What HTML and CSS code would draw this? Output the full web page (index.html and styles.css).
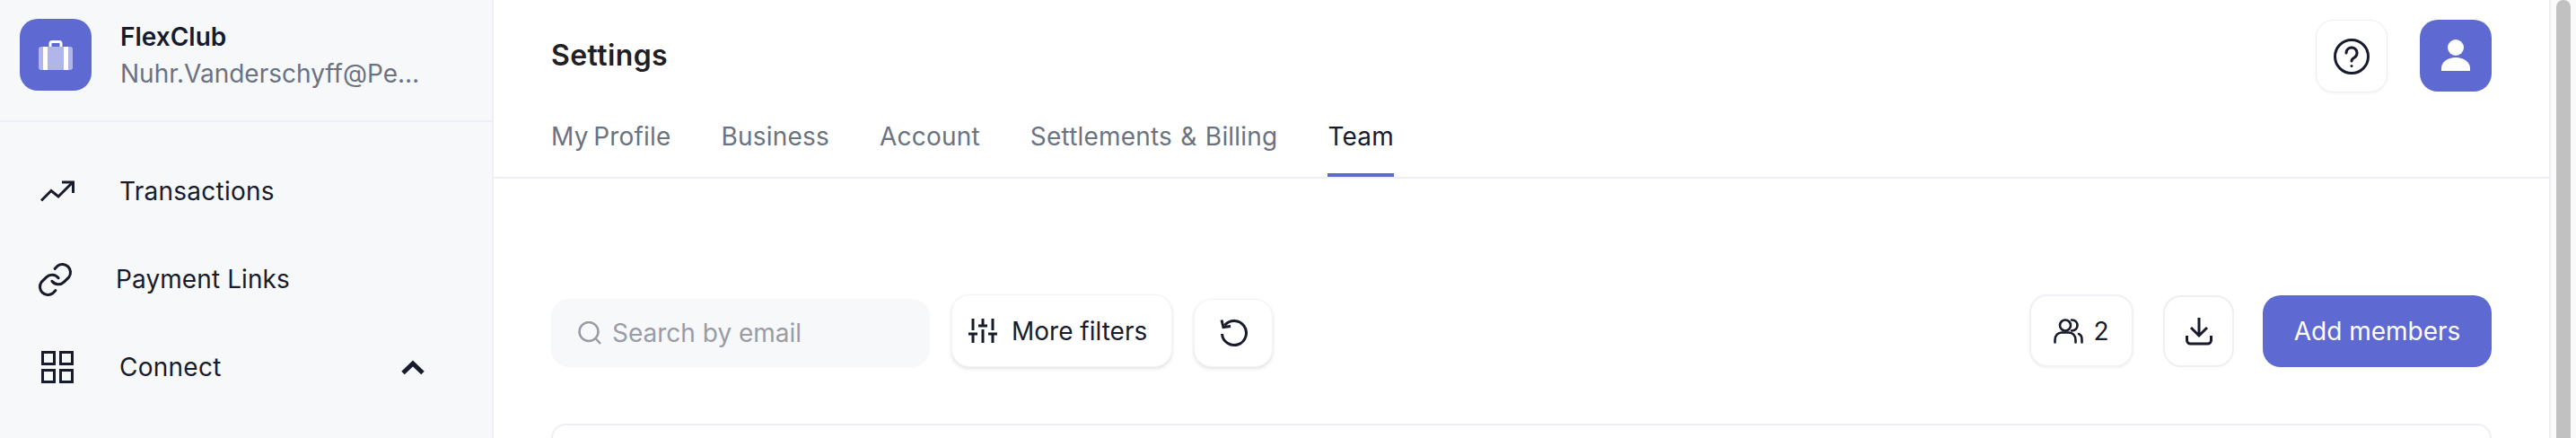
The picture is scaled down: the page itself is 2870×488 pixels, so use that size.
FILE: index.html
```html
<!DOCTYPE html>
<html lang="en">
<head>
<meta charset="UTF-8">
<meta name="viewport" content="width=device-width, initial-scale=1.0">
<title>Settings - Team</title>
<link rel="stylesheet" href="styles.css">
</head>
<body>
<div class="app">
  <aside class="sidebar">
    <div class="brand">
      <div class="brand-logo">
        <svg width="38" height="33" viewBox="0 0 38 33">
          <path d="M13 8V3.500A2 2 0 0 1 15 1.500H23A2 2 0 0 1 25 3.500V8" fill="none" stroke="#fff" stroke-width="3"/>
          <rect x="0" y="7" width="38" height="26" rx="3" fill="#b0b6e9"/>
          <rect x="5" y="7" width="5" height="26" fill="#fff"/>
          <rect x="28" y="7" width="5" height="26" fill="#fff"/>
        </svg>
      </div>
      <div class="brand-text">
        <div class="brand-name">FlexClub</div>
        <div class="brand-email">Nuhr.Vanderschyff@Pe…</div>
      </div>
    </div>
    <nav class="nav">
      <a class="nav-item">
        <svg class="nav-icon nav-icon-wide" width="38" height="24" viewBox="0 0 38 24" fill="none" stroke="#171b2b" stroke-width="3">
          <path d="M1 22.500L12 11.500L20 18L36 2"/>
          <path d="M24 2H36.500V14"/>
        </svg>
        <span>Transactions</span>
      </a>
      <a class="nav-item nav-item-links">
        <svg class="nav-icon" width="43" height="43" viewBox="0 0 24 24" fill="none" stroke="#171b2b" stroke-width="1.700" stroke-linecap="round" stroke-linejoin="round">
          <path d="M10 13a5 5 0 0 0 7.500.5l3-3a5 5 0 0 0-7-7l-1.700 1.700"/>
          <path d="M14 11a5 5 0 0 0-7.500-.5l-3 3a5 5 0 0 0 7 7l1.700-1.700"/>
        </svg>
        <span>Payment Links</span>
      </a>
      <a class="nav-item">
        <svg class="nav-icon" width="36" height="36" viewBox="0 0 36 36" fill="none" stroke="#171b2b" stroke-width="3">
          <rect x="1.500" y="1.500" width="13" height="13"/>
          <rect x="21.500" y="1.500" width="13" height="13"/>
          <rect x="1.500" y="21.500" width="13" height="13"/>
          <rect x="21.500" y="21.500" width="13" height="13"/>
        </svg>
        <span>Connect</span>
        <svg class="nav-chevron" width="26" height="17" viewBox="0 0 26 17" fill="none" stroke="#171b2b" stroke-width="5">
          <path d="M2 14.500L13 4L24 14.500"/>
        </svg>
      </a>
    </nav>
  </aside>

  <main class="main">
    <header class="page-header">
      <div class="title-row">
        <h1 class="page-title">Settings</h1>
        <div class="header-actions">
          <button class="btn btn-help">
            <svg width="40" height="40" viewBox="0 0 40 40" fill="none" stroke="#171b2b" stroke-width="3" stroke-linecap="round">
              <circle cx="20" cy="20" r="18.500"/>
              <path d="M14 16a6 6 0 1 1 9 5.200c-2 1.100-3 1.800-3 3.800"/>
              <path d="M20 30.500v.1"/>
            </svg>
          </button>
          <div class="avatar">
            <svg width="32" height="36" viewBox="0 0 32 36" fill="#fff">
              <circle cx="16" cy="10" r="9"/>
              <path d="M0 36V33C0 26 7 21 16 21S32 26 32 33V36Z"/>
            </svg>
          </div>
        </div>
      </div>
      <div class="tabs">
        <a class="tab tab-profile">My Profile</a>
        <a class="tab">Business</a>
        <a class="tab">Account</a>
        <a class="tab tab-billing">Settlements &amp; Billing</a>
        <a class="tab tab-active">Team</a>
      </div>
    </header>

    <section class="content">
      <div class="toolbar">
        <div class="search">
          <svg width="28" height="26" viewBox="0 0 28 26" fill="none" stroke="#9a9ca5" stroke-width="2.500">
            <circle cx="12" cy="11.500" r="10.500"/>
            <path d="M19.500 19L25 25"/>
          </svg>
          <span class="search-text">Search by email</span>
        </div>
        <button class="btn btn-filters">
          <svg width="32" height="27" viewBox="0 0 32 27" fill="none" stroke="#171b2b" stroke-width="3">
            <path d="M5 0V13M0 17H10M5 17V27"/>
            <path d="M16 0V8M11 8H21M16 12V27"/>
            <path d="M27 0V13M22 17H32M27 17V27"/>
          </svg>
          <span>More filters</span>
        </button>
        <button class="btn btn-reset">
          <svg width="32" height="32" viewBox="0 0 32 32" fill="none" stroke="#171b2b" stroke-width="3">
            <path d="M6.500 7.500A13.500 13.500 0 1 1 3.500 17"/>
            <path d="M3 1.500L5 9.500L13 8.500"/>
          </svg>
        </button>
        <div class="toolbar-right">
          <button class="btn btn-count">
            <svg width="33" height="28" viewBox="0 0 33 28" fill="none" stroke="#171b2b" stroke-width="2.600" stroke-linecap="round">
              <circle cx="13" cy="7.500" r="6"/>
              <path d="M1.500 26.500V24C1.500 18.500 5 15.500 9 15.500H17C21 15.500 24.500 18.500 24.500 24V26.500"/>
              <path d="M20 1.500C24.500 1.500 26.500 4.500 26.500 7.500S24.500 13.500 20 13.500"/>
              <path d="M28 17C30.500 18 31.500 21 31.500 23.500V26.500"/>
            </svg>
            <span>2</span>
          </button>
          <button class="btn btn-download">
            <svg width="30" height="31" viewBox="0 0 30 31" fill="none" stroke="#171b2b" stroke-width="3">
              <path d="M15 0V20M6 11L15 20L24 11"/>
              <path d="M1.500 20V25A4 4 0 0 0 5.500 29H24.500A4 4 0 0 0 28.500 25V20"/>
            </svg>
          </button>
          <button class="btn-primary">Add members</button>
        </div>
      </div>
      <div class="card"></div>
    </section>
  </main>

  <div class="scrollbar">
    <div class="scrollbar-thumb"></div>
  </div>
</div>
</body>
</html>
```

FILE: styles.css
```css
* {
  box-sizing: border-box;
}
html, body {
  margin: 0;
  padding: 0;
  height: 100%;
  overflow: hidden;
}
body {
  font-family: Inter, "Noto Sans", sans-serif;
  font-size: 28px;
  color: #171b2b;
  background-color: #fff;
}
.app {
  display: flex;
  width: 2870px;
  height: 488px;
}

/* sidebar */
.sidebar {
  width: 550px;
  flex-shrink: 0;
  background-color: #f7f8fa;
  border-right: 2px solid #eeeef4;
}
.brand {
  display: flex;
  align-items: center;
  gap: 32px;
  height: 136px;
  padding: 0 22px 12px;
  border-bottom: 2px solid #eeeef4;
}
.brand-logo {
  display: flex;
  align-items: center;
  justify-content: center;
  width: 80px;
  height: 80px;
  flex-shrink: 0;
  background-color: #5e69d2;
  border-radius: 20px;
}
.brand-name {
  font-weight: 600;
  line-height: 34px;
  margin-bottom: 7px;
}
.brand-email {
  line-height: 34px;
  color: #6b7280;
  white-space: nowrap;
}
.nav {
  padding-top: 28px;
}
.nav-item {
  display: flex;
  align-items: center;
  gap: 51px;
  height: 98px;
  padding: 0 75px 0 46px;
  letter-spacing: 0.25px;
}
.nav-item-links {
  gap: 46px;
  padding-left: 40px;
  letter-spacing: 0.1px;
}
.nav-icon {
  flex-shrink: 0;
}
.nav-icon-wide {
  margin: 0 -1px;
}
.nav-chevron {
  margin-left: auto;
}

/* header */
.main {
  flex: 1;
  min-width: 0;
}
.page-header {
  padding-top: 22px;
  border-bottom: 2px solid #eeeef4;
}
.title-row {
  display: flex;
  align-items: center;
  justify-content: space-between;
  height: 81px;
  padding: 0 64px;
}
.page-title {
  margin: 0 0 2px;
  font-size: 32px;
  font-weight: 600;
  letter-spacing: 0.4px;
  color: #1f2024;
}
.header-actions {
  display: flex;
  align-items: flex-start;
  gap: 36px;
  height: 81px;
}
.avatar {
  display: flex;
  align-items: center;
  justify-content: center;
  width: 80px;
  height: 80px;
  background-color: #5e69d2;
  border-radius: 20px;
  padding-bottom: 3px;
}
.tabs {
  display: flex;
  gap: 56px;
  padding: 27px 64px 0;
}
.tab {
  padding: 5px 0 24px;
  line-height: 34px;
  letter-spacing: 0.2px;
  color: #6b7280;
  border-bottom: 4px solid transparent;
}
.tab-profile {
  word-spacing: -2.5px;
}
.tab-billing {
  word-spacing: 1.2px;
}
.tab-active {
  color: #171b2b;
  border-bottom-color: #5e69d2;
}

/* buttons */
.btn {
  display: flex;
  align-items: center;
  justify-content: center;
  font-family: inherit;
  font-size: 28px;
  color: #171b2b;
  background-color: #fff;
  border: 1px solid #f3f3f7;
  border-radius: 20px;
  padding: 0;
}
.btn-help {
  width: 80px;
  height: 81px;
  border-color: #eeeef4;
  box-shadow: 0 1px 3px rgba(23, 27, 43, 0.06);
}
.btn-filters {
  justify-content: flex-start;
  gap: 16px;
  width: 246px;
  height: 81px;
  padding-left: 18px;
  box-shadow: 0 2px 4px rgba(23, 27, 43, 0.12);
}
.btn-reset {
  width: 88px;
  height: 76px;
  margin-left: 24px;
  box-shadow: 0 2px 4px rgba(23, 27, 43, 0.12);
}
.btn-count {
  gap: 11px;
  width: 116px;
  height: 81px;
  border: 2px solid #f1f1f6;
  box-shadow: 0 1px 3px rgba(23, 27, 43, 0.06);
}
.btn-download {
  width: 79px;
  height: 80px;
  margin-left: 33px;
  border: 2px solid #eeeef4;
}
.btn-primary {
  width: 255px;
  height: 80px;
  margin-left: 32px;
  font-family: inherit;
  font-size: 28px;
  color: #fff;
  background-color: #5e69d2;
  border: none;
  border-radius: 20px;
}

/* toolbar */
.content {
  padding: 129px 64px 0;
}
.toolbar {
  display: flex;
  align-items: flex-end;
  height: 81px;
}
.search {
  display: flex;
  align-items: center;
  gap: 10px;
  width: 422px;
  height: 76px;
  padding-left: 30px;
  margin-right: 24px;
  background-color: #f7f8fa;
  border-radius: 20px;
}
.search-text {
  color: #9a9ca5;
}
.toolbar-right {
  display: flex;
  align-items: flex-end;
  margin-left: auto;
}
.card {
  height: 16px;
  margin-top: 63px;
  border: 2px solid #eeeef4;
  border-bottom: none;
  border-radius: 20px 20px 0 0;
}

/* browser scrollbar */
.scrollbar {
  width: 30px;
  flex-shrink: 0;
  padding-left: 6px;
  background-color: #fafafa;
  border-left: 2px solid #eeeef4;
}
.scrollbar-thumb {
  width: 16px;
  height: 488px;
  background-color: #c1c1c1;
  border-radius: 8px 8px 0 0;
}
```
